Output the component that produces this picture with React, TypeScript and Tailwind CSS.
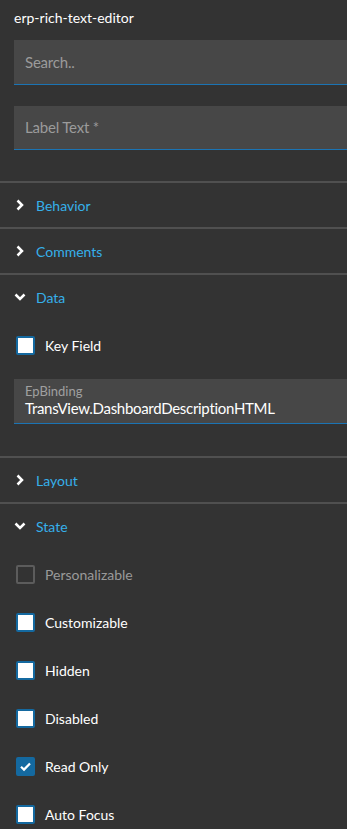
import { ReactNode } from 'react'

const font = { fontFamily: 'Lato, "Open Sans", sans-serif' }

const Chevron = ({ open }: { open: boolean }) => (
    <svg width="12" height="12" viewBox="0 0 12 12" className="shrink-0">
        {open
            ? <path d="M1.5 3.5 L6 8 L10.5 3.5" fill="none" stroke="#fff" strokeWidth="2.5" />
            : <path d="M3.5 1.5 L8 6 L3.5 10.5" fill="none" stroke="#fff" strokeWidth="2.5" />}
    </svg>
)

const Separator = () => <div className="h-[2px] bg-[#505050]" />

const SectionHeader = ({ label, open }: { label: string, open?: boolean }) => (
    <div className="flex items-center h-[44px] pl-[14px]">
        <Chevron open={!!open} />
        <span className="ml-[10px] text-[14px] text-[#36b0ea]">{label}</span>
    </div>
)

type CheckProps = { label: string, checked?: boolean, disabled?: boolean }

const Check = ({ label, checked, disabled }: CheckProps) => {
    const box = disabled
        ? 'border-[#5c5c5c] bg-transparent'
        : checked ? 'border-[#1469a0] bg-[#1469a0]' : 'border-[#1469a0] bg-white'
    return (
        <div className="flex items-center h-[48px] pl-[16px]">
            <div className={`w-[19px] h-[19px] rounded-[2px] border-2 flex items-center justify-center ${box}`}>
                {checked && (
                    <svg width="13" height="13" viewBox="0 0 13 13">
                        <path d="M2 6.8 L5 9.6 L11 3.4" fill="none" stroke="#fff" strokeWidth="2.2" />
                    </svg>
                )}
            </div>
            <span className={`ml-[10px] text-[14px] ${disabled ? 'text-[#9a9a9a]' : 'text-white'}`}>{label}</span>
        </div>
    )
}

const Field = ({ children, className }: { children: ReactNode, className?: string }) => (
    <div className={`ml-[14px] bg-[#474747] border-b border-[#1b74b4] pl-[11px] ${className ?? ''}`}>
        {children}
    </div>
)

export default function App() {
    return (
        <div className="w-[347px] h-[829px] bg-[#333333] overflow-hidden" style={font}>
            <div className="pl-[14px] pt-[7px] h-[40px] text-[14px] text-white">erp-rich-text-editor</div>
            <Field className="h-[45px] flex items-center">
                <span className="text-[15px] tracking-[-0.2px] text-[#9b9b9b]">Search..</span>
            </Field>
            <div className="h-[21px]" />
            <Field className="h-[44px] flex items-center">
                <span className="text-[15px] tracking-[-0.2px] text-[#9b9b9b]">Label Text *</span>
            </Field>
            <div className="h-[31px]" />
            <Separator />
            <SectionHeader label="Behavior" />
            <Separator />
            <SectionHeader label="Comments" />
            <Separator />
            <SectionHeader label="Data" open />
            <div className="mt-[2px]">
                <Check label="Key Field" />
            </div>
            <Field className="mt-[10px] h-[45px] flex flex-col justify-center">
                <span className="text-[13px] leading-[15px] text-[#a0a0a0]">EpBinding</span>
                <span className="text-[15px] leading-[19px] tracking-[-0.3px] text-white">TransView.DashboardDescriptionHTML</span>
            </Field>
            <div className="h-[32px]" />
            <Separator />
            <SectionHeader label="Layout" />
            <Separator />
            <SectionHeader label="State" open />
            <div className="mt-[2px]">
                <Check label="Personalizable" disabled />
                <Check label="Customizable" />
                <Check label="Hidden" />
                <Check label="Disabled" />
                <Check label="Read Only" checked />
                <Check label="Auto Focus" />
            </div>
        </div>
    )
}
